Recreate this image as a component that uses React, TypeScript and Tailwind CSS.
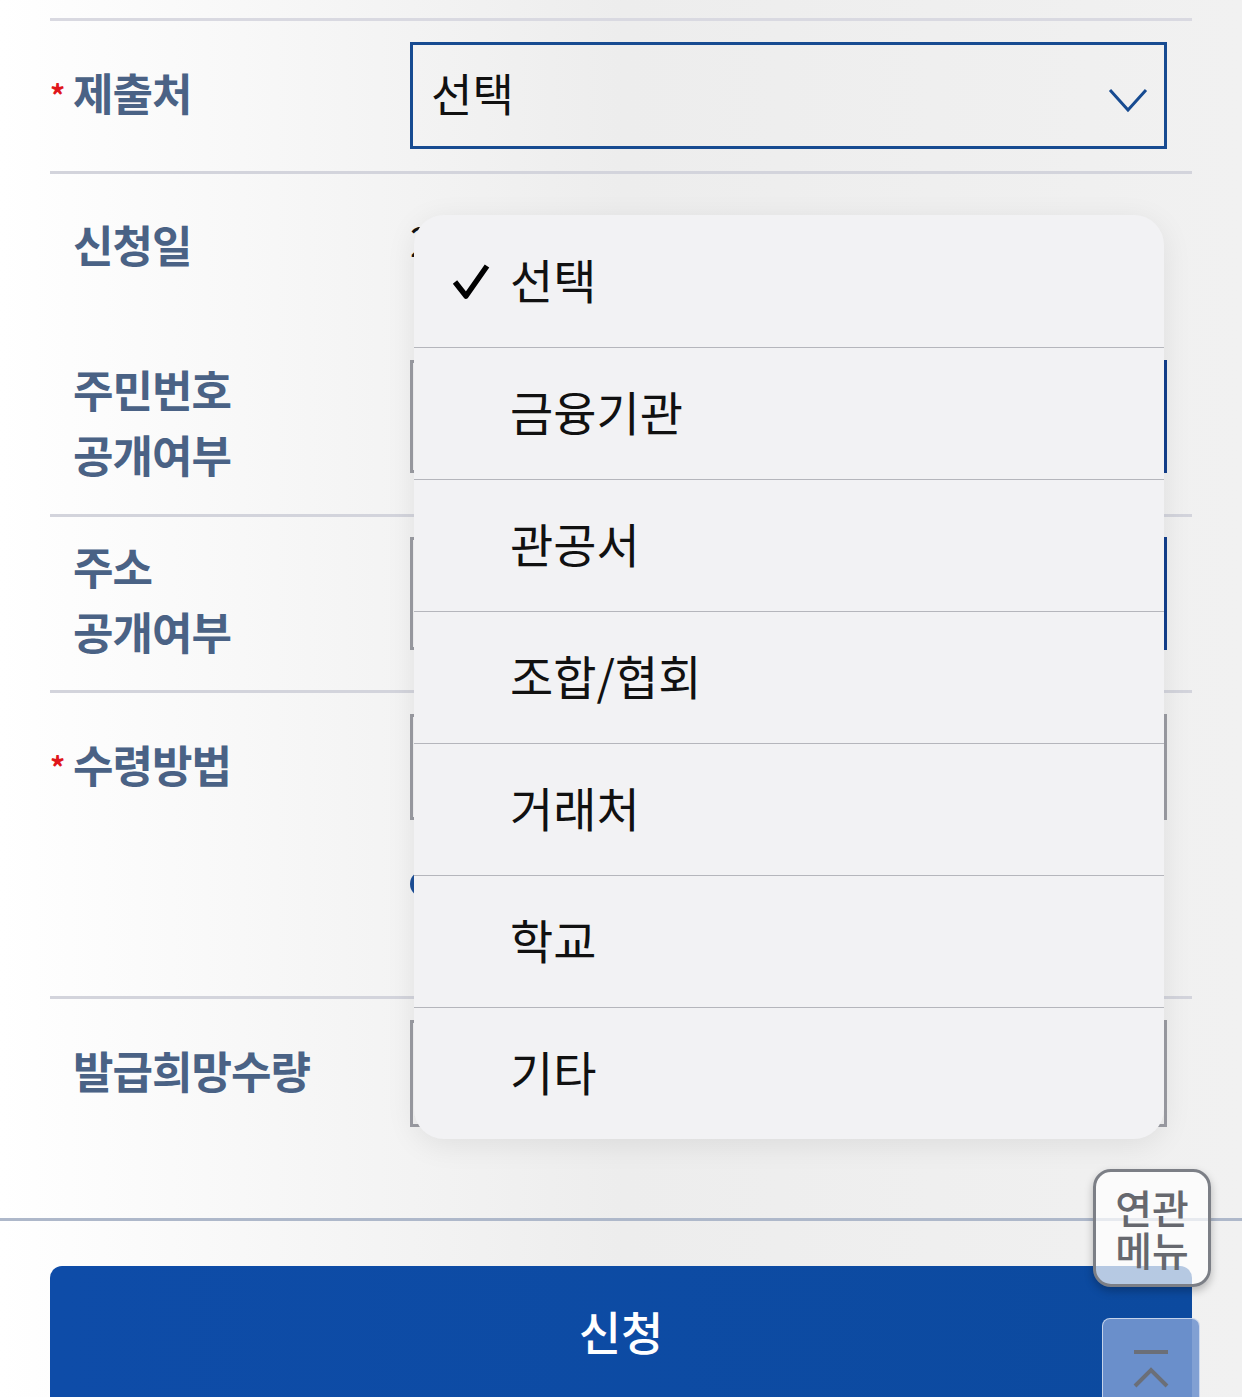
import React from "react";

const font = { fontFamily: '"Noto Sans CJK KR", "Noto Sans", sans-serif' };

function Label({ lines, required }: { lines: string[]; required?: boolean }) {
  return (
    <div className="relative w-[360px] shrink-0 pl-[23px] text-[44px] font-bold leading-[65px] tracking-[-1px] text-[#4a6285]">
      {required && (
        <span className="absolute left-0 top-[2px] text-[30px] text-[#e0161b]">*</span>
      )}
      {lines.map((l) => (
        <div key={l}>{l}</div>
      ))}
    </div>
  );
}

function SplitBox() {
  return (
    <div className="flex h-[113px] flex-1">
      <div className="flex-1 border-[3px] border-r-0 border-[#9b9ca3]" />
      <div className="flex-1 border-[3px] border-r-[4px] border-[#123f8c]" />
    </div>
  );
}

const options = ["선택", "금융기관", "관공서", "조합/협회", "거래처", "학교", "기타"];

export default function App() {
  return (
    <div
      className="relative h-[1397px] w-[1242px] overflow-hidden bg-gradient-to-r from-[#ffffff] via-[#ededed] to-[#f1f1f1]"
      style={font}
    >
      <div className="px-[50px] pt-[18px]">
        <div className="h-[3px] bg-[#d9d9e1]" />

        {/* 제출처 */}
        <div className="flex h-[150px] items-start pr-[25px] pt-[21px]">
          <div className="flex h-[101px] items-center">
            <Label lines={["제출처"]} required />
          </div>
          <div className="flex h-[107px] flex-1 items-center justify-between border-[3px] border-[#174b91] pl-[18px] pr-[16px]">
            <span className="-mt-[6px] text-[45px] text-[#111]">선택</span>
            <svg width="40" height="26" viewBox="0 0 40 26" className="mt-[8px]">
              <path d="M2 3 L20 23 L38 3" fill="none" stroke="#174b91" strokeWidth="3" />
            </svg>
          </div>
        </div>
        <div className="h-[3px] bg-[#d3d4dc]" />

        {/* 신청일 */}
        <div className="flex h-[164px] pt-[38px]">
          <div className="leading-[57px]">
            <Label lines={["신청일"]} />
          </div>
          <div className="text-[40px] leading-[57px] text-[#111]">2024.05.20</div>
        </div>

        {/* 주민번호 공개여부 */}
        <div className="flex h-[176px] pr-[25px]">
          <div className="pt-[19px]">
            <Label lines={["주민번호", "공개여부"]} />
          </div>
          <div className="flex-1 pt-[22px]">
            <SplitBox />
          </div>
        </div>
        <div className="h-[3px] bg-[#d3d4dc]" />

        {/* 주소 공개여부 */}
        <div className="flex h-[173px] pr-[25px]">
          <div className="pt-[17px]">
            <Label lines={["주소", "공개여부"]} />
          </div>
          <div className="flex-1 pt-[20px]">
            <SplitBox />
          </div>
        </div>
        <div className="h-[3px] bg-[#d3d4dc]" />

        {/* 수령방법 */}
        <div className="flex h-[303px] pr-[25px] pt-[21px]">
          <div className="pt-[18px] leading-[57px]">
            <Label lines={["수령방법"]} required />
          </div>
          <div className="flex flex-1 flex-col gap-[38px]">
            <div className="h-[106px] border-[3px] border-[#9b9ca3]" />
            <div className="flex items-center gap-3">
              <div className="h-[26px] w-[26px] rounded-full border-[4px] border-[#1d4f98]" />
              <span className="text-[34px] text-[#333]">우편수령</span>
            </div>
          </div>
        </div>
        <div className="h-[3px] bg-[#d3d4dc]" />

        {/* 발급희망수량 */}
        <div className="flex h-[219px] pr-[25px] pt-[21px]">
          <div className="pt-[18px]">
            <Label lines={["발급희망수량"]} />
          </div>
          <div className="h-[107px] flex-1 border-[3px] border-[#9b9ca3]" />
        </div>
      </div>

      <div className="h-[3px] bg-[#aeb8ca]" />

      <div className="px-[50px] pt-[45px]">
        <div className="flex h-[140px] justify-center rounded-t-[12px] bg-gradient-to-r from-[#0e4ca8] to-[#0c4a9f] pt-[30px] text-[46px] font-medium text-white">
          신청
        </div>
      </div>

      {/* dropdown menu */}
      <div className="absolute left-[414px] top-[215px] w-[750px] overflow-hidden rounded-[30px] bg-[#f2f2f4] shadow-[0_6px_30px_rgba(0,0,0,0.08)]">
        {options.map((o, i) => (
          <div
            key={o}
            className={`flex h-[132px] items-center ${i > 0 ? "border-t-[1.5px] border-[#b5b6bc]" : ""}`}
          >
            <div className="flex w-[96px] justify-end pr-[20px]">
              {i === 0 && (
                <svg width="38" height="38" viewBox="0 0 38 38">
                  <path d="M3 20 L14 34 L35 4" fill="none" stroke="#000" strokeWidth="5.5" strokeLinejoin="round" />
                </svg>
              )}
            </div>
            <span className="-mt-[4px] text-[47px] text-[#111]">{o}</span>
          </div>
        ))}
      </div>

      {/* related menu */}
      <div className="absolute left-[1093px] top-[1169px] flex h-[118px] w-[118px] flex-col items-center justify-center rounded-[18px] border-[3px] border-[#7c7f86] bg-white/70 text-[40px] font-medium leading-[42px] text-[#66686e] shadow-[0_4px_8px_rgba(0,0,0,0.25)]">
        <span>연관</span>
        <span>메뉴</span>
      </div>

      {/* scroll top */}
      <div className="absolute left-[1102px] top-[1318px] flex h-[100px] w-[98px] flex-col items-center rounded-[8px] border border-white/60 bg-[#7497cf]/90 pt-[30px]">
        <svg width="38" height="42" viewBox="0 0 38 42">
          <path d="M2 3 H36" stroke="#6b6f78" strokeWidth="4" />
          <path d="M3 37 L19 21 L35 37" fill="none" stroke="#6b6f78" strokeWidth="4" />
        </svg>
      </div>
    </div>
  );
}
